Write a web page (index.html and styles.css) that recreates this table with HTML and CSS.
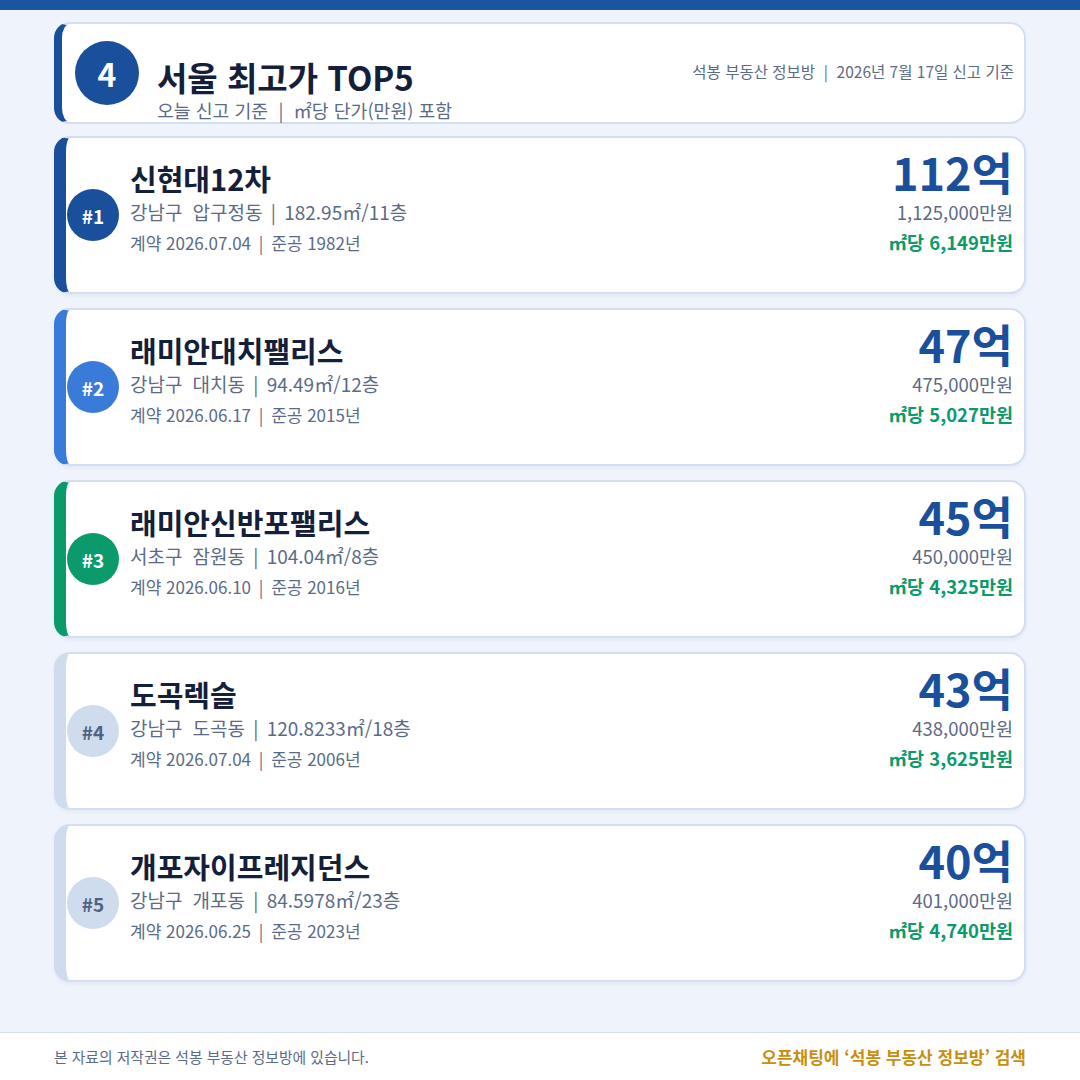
FILE: index.html
```html
<!DOCTYPE html>
<html lang="ko">

<head>
  <meta charset="UTF-8">
  <meta name="viewport" content="width=device-width, initial-scale=1.0">
  <title>서울 최고가 TOP5</title>
  <link rel="stylesheet" href="styles.css">
</head>

<body>
  <div class="topbar"></div>

  <main class="main">
    <header class="head-card">
      <div class="head-badge">4</div>
      <div class="head-title">
        <h1>서울 최고가 TOP5</h1>
        <p>오늘 신고 기준 &nbsp;|&nbsp; ㎡당 단가(만원) 포함</p>
      </div>
      <div class="head-meta">석봉 부동산 정보방 &nbsp;|&nbsp; 2026년 7월 17일 신고 기준</div>
    </header>

    <div class="card rank-1">
      <div class="rank">#1</div>
      <div class="info">
        <h2>신현대12차</h2>
        <div class="loc"><span class="gu">강남구</span>압구정동 <span class="sep">|</span> 182.95㎡/11층</div>
        <div class="date">계약 2026.07.04 <span class="sep">|</span> 준공 1982년</div>
      </div>
      <div class="price">
        <div class="big">112억</div>
        <div class="won">1,125,000만원</div>
        <div class="per">㎡당 6,149만원</div>
      </div>
    </div>

    <div class="card rank-2">
      <div class="rank">#2</div>
      <div class="info">
        <h2>래미안대치팰리스</h2>
        <div class="loc"><span class="gu">강남구</span>대치동 <span class="sep">|</span> 94.49㎡/12층</div>
        <div class="date">계약 2026.06.17 <span class="sep">|</span> 준공 2015년</div>
      </div>
      <div class="price">
        <div class="big">47억</div>
        <div class="won">475,000만원</div>
        <div class="per">㎡당 5,027만원</div>
      </div>
    </div>

    <div class="card rank-3">
      <div class="rank">#3</div>
      <div class="info">
        <h2>래미안신반포팰리스</h2>
        <div class="loc"><span class="gu">서초구</span>잠원동 <span class="sep">|</span> 104.04㎡/8층</div>
        <div class="date">계약 2026.06.10 <span class="sep">|</span> 준공 2016년</div>
      </div>
      <div class="price">
        <div class="big">45억</div>
        <div class="won">450,000만원</div>
        <div class="per">㎡당 4,325만원</div>
      </div>
    </div>

    <div class="card rank-low">
      <div class="rank">#4</div>
      <div class="info">
        <h2>도곡렉슬</h2>
        <div class="loc"><span class="gu">강남구</span>도곡동 <span class="sep">|</span> 120.8233㎡/18층</div>
        <div class="date">계약 2026.07.04 <span class="sep">|</span> 준공 2006년</div>
      </div>
      <div class="price">
        <div class="big">43억</div>
        <div class="won">438,000만원</div>
        <div class="per">㎡당 3,625만원</div>
      </div>
    </div>

    <div class="card rank-low">
      <div class="rank">#5</div>
      <div class="info">
        <h2>개포자이프레지던스</h2>
        <div class="loc"><span class="gu">강남구</span>개포동 <span class="sep">|</span> 84.5978㎡/23층</div>
        <div class="date">계약 2026.06.25 <span class="sep">|</span> 준공 2023년</div>
      </div>
      <div class="price">
        <div class="big">40억</div>
        <div class="won">401,000만원</div>
        <div class="per">㎡당 4,740만원</div>
      </div>
    </div>
  </main>

  <footer class="footer">
    <span class="copy">본 자료의 저작권은 석봉 부동산 정보방에 있습니다.</span>
    <span class="promo">오픈채팅에 ‘석봉 부동산 정보방’ 검색</span>
  </footer>
</body>

</html>
```

FILE: styles.css
```css
* {
  box-sizing: border-box;
}

body {
  margin: 0;
  height: 1080px;
  display: flex;
  flex-direction: column;
  background-color: #eef3fc;
  font-family: "Noto Sans CJK KR", "Noto Sans", sans-serif;
  color: #14203a;
}

.topbar {
  height: 10px;
  background-color: #1a55a0;
}

.main {
  flex: 1;
  display: flex;
  flex-direction: column;
  gap: 14px;
  padding: 12px 54px 0;
}

/* Header card */
.head-card {
  height: 102px;
  display: flex;
  align-items: center;
  background: #fff;
  border: 2px solid #d3deef;
  border-left: 8px solid #1a4f9c;
  border-radius: 16px;
  margin-bottom: -2px;
  padding-right: 10px;
}

.head-badge {
  width: 64px;
  height: 64px;
  margin-left: 13px;
  border-radius: 50%;
  background-color: #1a4f9c;
  color: #fff;
  font-size: 32px;
  font-weight: bold;
  display: flex;
  align-items: center;
  justify-content: center;
}

.head-title {
  align-self: flex-end;
  margin-left: 18px;
  margin-bottom: -1px;
}

.head-title h1 {
  margin: 0;
  font-size: 33px;
  line-height: 40px;
  font-weight: bold;
}

.head-title p {
  margin: 0;
  font-size: 18.3px;
  line-height: 26px;
  color: #5b6b86;
}

.head-meta {
  margin-left: auto;
  margin-bottom: 4px;
  font-size: 15.5px;
  color: #5b6b86;
}

/* Ranking cards */
.card {
  height: 158px;
  display: flex;
  align-items: flex-start;
  background: #fff;
  border: 2px solid #d3deef;
  border-left: 12px solid #1a4f9c;
  border-radius: 16px;
  padding: 9px 11px 0 0;
  box-shadow: 0 2px 4px rgba(30, 60, 120, 0.05);
}

.rank {
  align-self: center;
  width: 52px;
  height: 52px;
  margin-top: -9px;
  margin-left: 1px;
  border-radius: 50%;
  background-color: #1a4f9c;
  color: #fff;
  font-size: 19px;
  font-weight: bold;
  display: flex;
  align-items: center;
  justify-content: center;
}

.rank-2 {
  border-left-color: #3a7bd9;
}

.rank-2 .rank {
  background-color: #3a7bd9;
}

.rank-3 {
  border-left-color: #0b9a6b;
}

.rank-3 .rank {
  background-color: #0b9a6b;
}

.rank-low {
  border-left-color: #cfdcee;
}

.rank-low .rank {
  background-color: #cfdcee;
  color: #4f6282;
}

.info {
  margin-left: 11px;
  margin-top: 13px;
}

.info h2 {
  margin: 0;
  font-size: 29px;
  line-height: 36px;
  font-weight: bold;
}

.loc {
  font-size: 19px;
  line-height: 32px;
  color: #5b6b86;
}

.gu {
  margin-right: 10px;
}

.sep {
  margin: 0 3px;
  color: #5b6b86;
}

.date {
  font-size: 17px;
  line-height: 30px;
  color: #5b6b86;
}

.price {
  margin-left: auto;
  text-align: right;
}

.big {
  font-size: 45px;
  line-height: 50px;
  font-weight: bold;
  color: #1a4f9c;
}

.won {
  font-size: 18.5px;
  line-height: 30px;
  color: #5b6b86;
}

.per {
  font-size: 18.5px;
  line-height: 30px;
  font-weight: bold;
  color: #0b9a6b;
}

/* Footer */
.footer {
  height: 48px;
  display: flex;
  align-items: center;
  justify-content: space-between;
  padding: 0 54px;
  background: #fff;
  border-top: 1px solid #d3deef;
}

.copy {
  font-size: 14.8px;
  color: #5b6b86;
}

.promo {
  font-size: 17px;
  font-weight: bold;
  color: #c98f0c;
}
```
